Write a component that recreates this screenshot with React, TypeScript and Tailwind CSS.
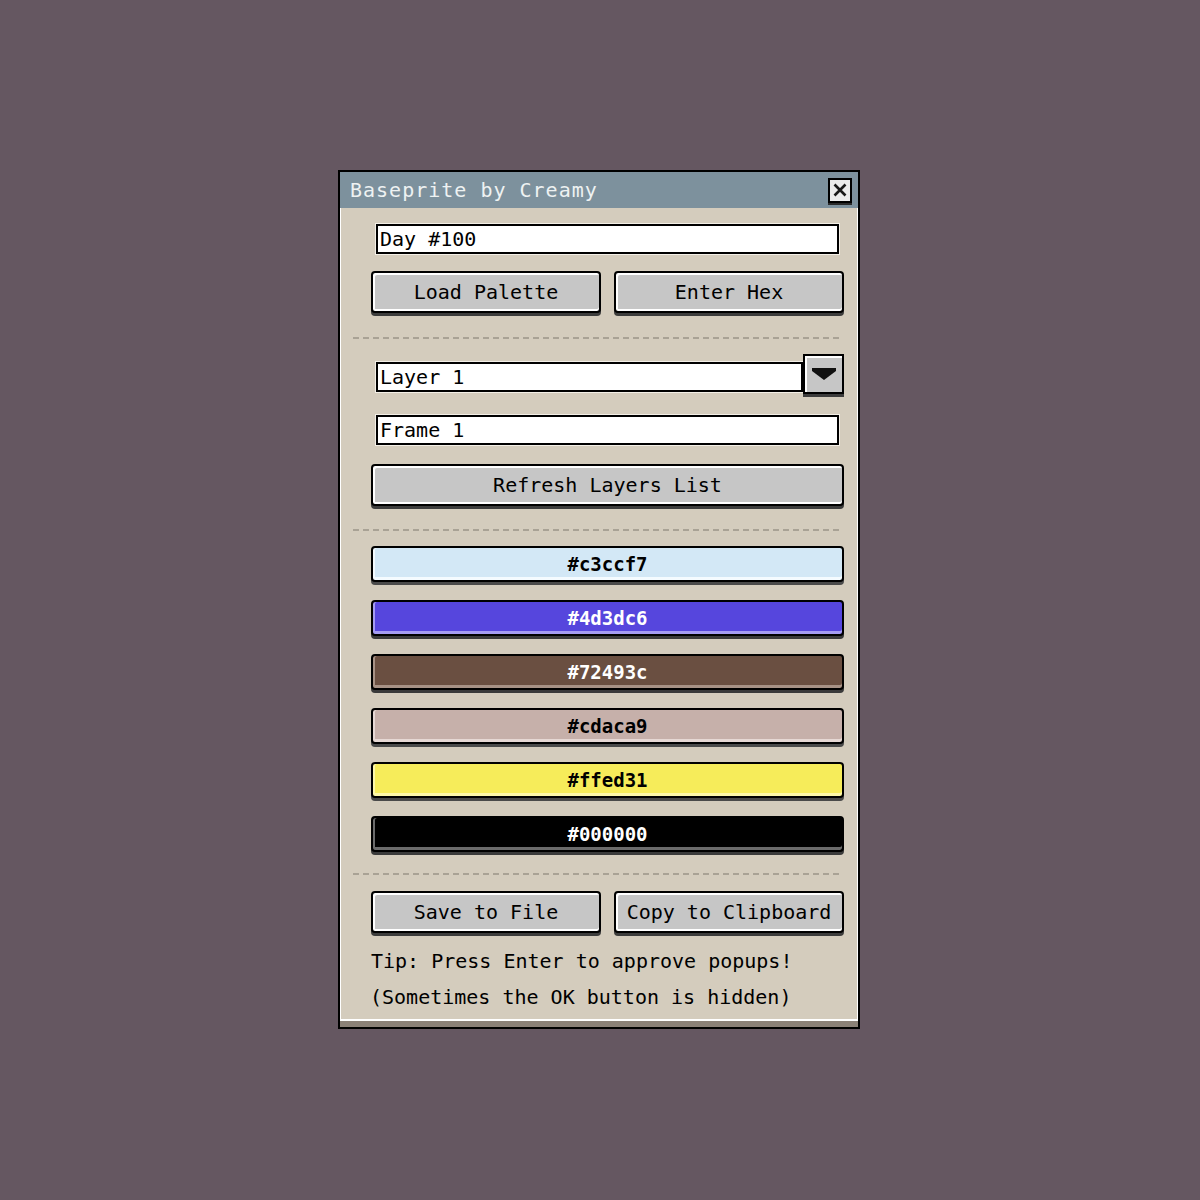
const font = "font-['DejaVu_Sans_Mono','Liberation_Mono',monospace]";

const swatches = [
  { hex: "#c3ccf7", fill: "bg-[#d3e8f6]", glow: "shadow-[inset_2px_0_0_#f4fbff,inset_0_-3px_0_#f4fbff,0_3px_0_#4a4a4a]", text: "text-black" },
  { hex: "#4d3dc6", fill: "bg-[#5646dd]", glow: "shadow-[inset_2px_0_0_#a59cf2,inset_0_-3px_0_#a59cf2,0_3px_0_#3a3a3a]", text: "text-white" },
  { hex: "#72493c", fill: "bg-[#6a4f41]", glow: "shadow-[inset_2px_0_0_#a79286,inset_0_-3px_0_#a79286,0_3px_0_#3a3a3a]", text: "text-white" },
  { hex: "#cdaca9", fill: "bg-[#c6b0aa]", glow: "shadow-[inset_2px_0_0_#e6d8d4,inset_0_-3px_0_#e6d8d4,0_3px_0_#4a4a4a]", text: "text-black" },
  { hex: "#ffed31", fill: "bg-[#f6ec5a]", glow: "shadow-[inset_2px_0_0_#fdf8a8,inset_0_-3px_0_#fdf8a8,0_3px_0_#4a4a4a]", text: "text-black" },
  { hex: "#000000", fill: "bg-black", glow: "shadow-[inset_2px_0_0_#6b6b6b,inset_0_-3px_0_#6b6b6b,0_3px_0_#3a3a3a]", text: "text-white" },
];

function Button({ label, className = "" }: { label: string; className?: string }) {
  return (
    <button
      className={`h-[42px] rounded-[4px] border-2 border-black bg-[#c6c6c6] text-[20px] leading-none text-black shadow-[inset_2px_2px_0_#fff,inset_0_-2px_0_#fff,0_3px_0_#3c3c3c] ${className}`}
    >
      {label}
    </button>
  );
}

function Field({ value, className = "" }: { value: string; className?: string }) {
  return (
    <div
      className={`flex h-[30px] items-center border-2 border-black bg-white pl-[2px] text-[20px] leading-none text-black shadow-[0_0_0_1px_#f3efe7] ${className}`}
    >
      {value}
    </div>
  );
}

function Separator({ className = "" }: { className?: string }) {
  return (
    <div
      className={`ml-[-18px] mr-[1px] h-[2px] bg-[repeating-linear-gradient(90deg,#a9a295_0_6px,transparent_6px_10px)] ${className}`}
    />
  );
}

export default function App() {
  return (
    <div className={`min-h-[1200px] bg-[#655761] pt-[170px] ${font}`}>
      <div className="mx-auto w-[522px] -translate-x-[1px] border-2 border-black bg-[#d4ccbd]">
        <div className="flex h-[36px] items-center justify-between bg-[#7d919d] pl-[10px] pr-[6px]">
          <span className="text-[20px] leading-none tracking-[1px] text-[#eef2f2]">Baseprite by Creamy</span>
          <div className="flex h-[25px] w-[24px] items-center justify-center border-2 border-black bg-[#ececec] shadow-[0_2px_0_#2a2a2a]">
            <svg width="14" height="14" viewBox="0 0 14 14">
              <path d="M1.5 1.5 L12.5 12.5 M12.5 1.5 L1.5 12.5" stroke="#1a1a1a" strokeWidth="2.6" />
            </svg>
          </div>
        </div>

        <div className="border-b-[6px] border-[#8b8177]">
          <div className="flex flex-col pb-[6px] pl-[31px] pr-[14px] shadow-[inset_1px_0_0_#fff,inset_-1px_0_0_#fff,inset_0_-2px_0_#fff]">
            <Field value="Day #100" className="mx-[5px] mt-[16px]" />

            <div className="mt-[17px] flex gap-[13px]">
              <Button label="Load Palette" className="flex-1" />
              <Button label="Enter Hex" className="flex-1" />
            </div>

            <Separator className="mt-[24px]" />

            <div className="mt-[15px] flex items-start pl-[5px]">
              <Field value="Layer 1" className="mt-[8px] flex-1" />
              <div className="flex h-[40px] w-[41px] items-center justify-center border-2 border-black bg-[#c6c6c6] shadow-[inset_2px_2px_0_#fff,0_3px_0_#3c3c3c]">
                <svg width="24" height="12" viewBox="0 0 24 12">
                  <polygon points="0,0 24,0 24,3 12,12 0,3" fill="#111" />
                </svg>
              </div>
            </div>

            <Field value="Frame 1" className="mx-[5px] mt-[21px]" />

            <Button label="Refresh Layers List" className="mt-[19px] w-full" />

            <Separator className="mt-[23px]" />

            <div className="mt-[15px] flex flex-col gap-[18px]">
              {swatches.map((s) => (
                <div
                  key={s.hex}
                  className={`flex h-[36px] items-center justify-center rounded-[4px] border-2 border-black text-[19px] font-bold leading-none ${s.fill} ${s.glow} ${s.text}`}
                >
                  {s.hex}
                </div>
              ))}
            </div>

            <Separator className="mt-[21px]" />

            <div className="mt-[16px] flex gap-[13px]">
              <Button label="Save to File" className="flex-1" />
              <Button label="Copy to Clipboard" className="flex-1" />
            </div>

            <div className="mt-[10px] text-[20px] leading-[36px] text-black">
              <p>Tip: Press Enter to approve popups!</p>
              <p className="-ml-[1px]">(Sometimes the OK button is hidden)</p>
            </div>
          </div>
        </div>
      </div>
    </div>
  );
}
